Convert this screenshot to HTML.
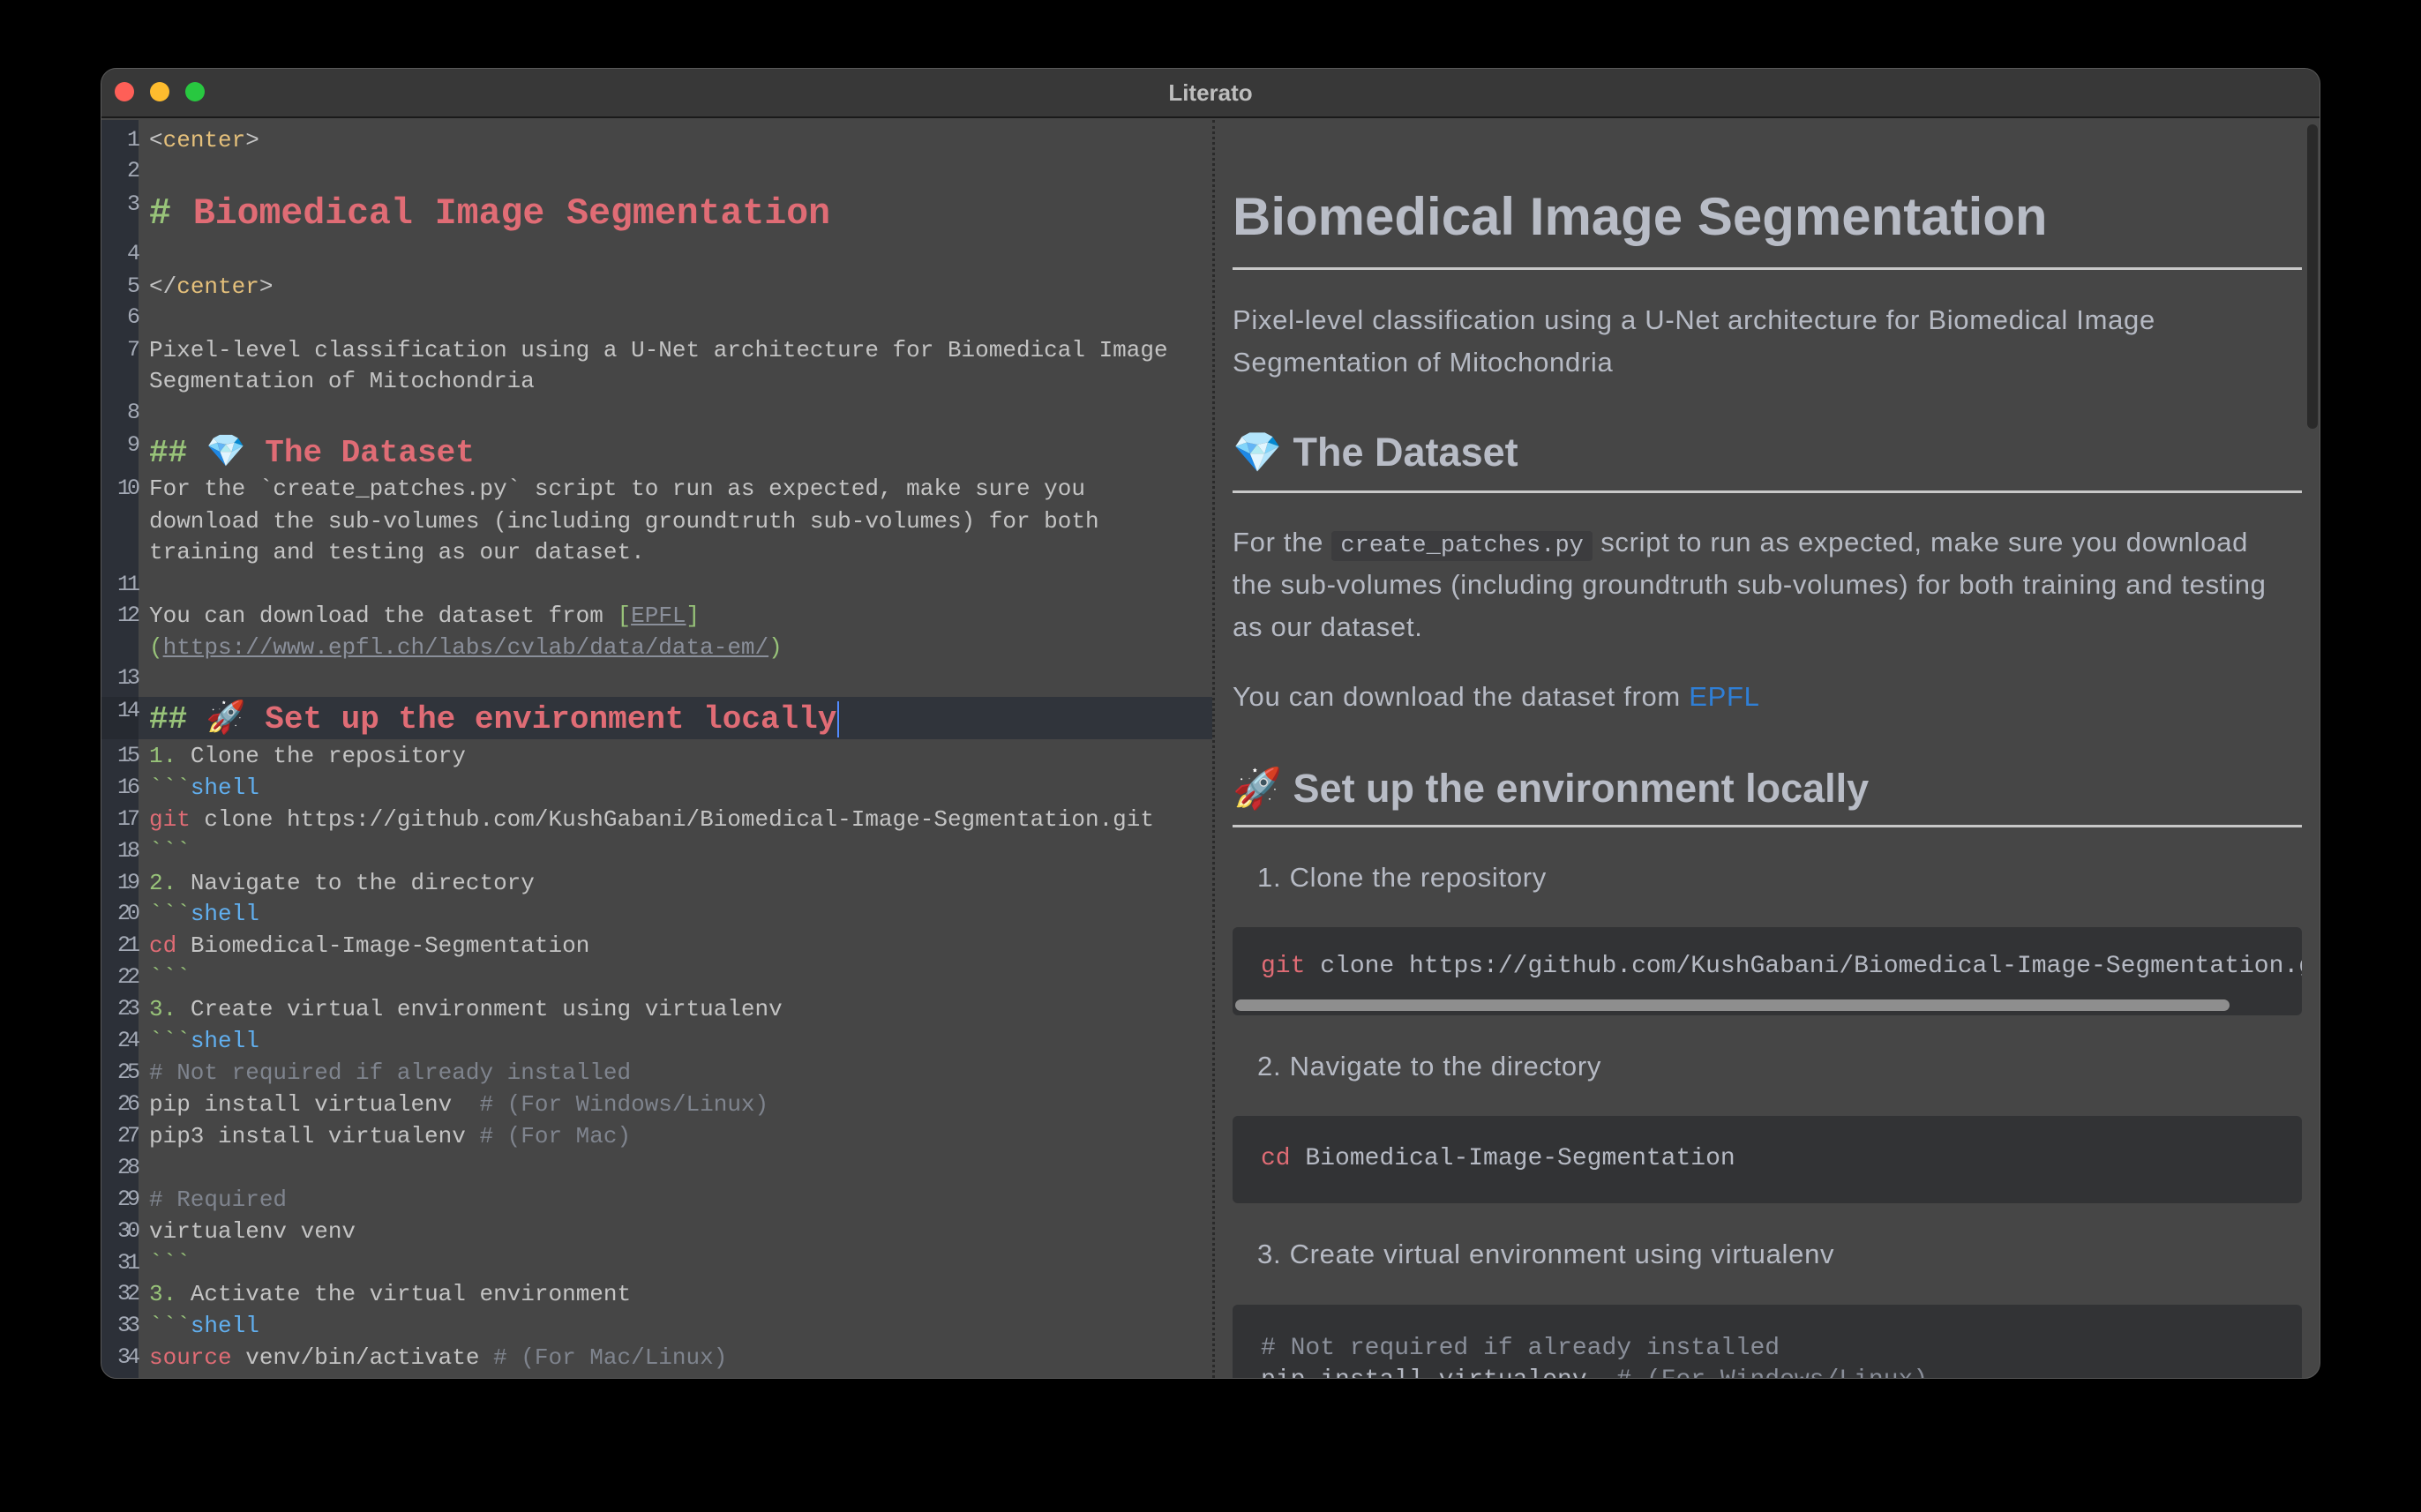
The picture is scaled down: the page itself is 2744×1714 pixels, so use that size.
<!DOCTYPE html>
<html><head><meta charset="utf-8"><style>
*{margin:0;padding:0;box-sizing:border-box}
body{width:2744px;height:1714px;background:#000;position:relative;overflow:hidden;font-family:"Liberation Sans",sans-serif}
.win{position:absolute;left:114px;top:77px;width:2516px;height:1486px;border-radius:18px;overflow:hidden;background:#464646;border:1px solid #5a5a5a}
.title{position:absolute;left:0;top:0;width:100%;height:56px;background:#383838;border-bottom:2px solid #1a1a1a}
.title .t{position:absolute;left:0;width:100%;text-align:center;top:12px;font-size:26px;font-weight:bold;color:#bdbdbd}
.dot{position:absolute;top:15px;width:22px;height:22px;border-radius:50%}
.gut{position:absolute;left:0;top:58px;width:42px;bottom:0;background:#2c3038}
.ed{position:absolute;left:0;top:0}
.l{position:absolute;left:54px;white-space:pre;font-family:"Liberation Mono",monospace;font-size:26px;line-height:36px;height:36px;color:#c4c4c4}
.n{position:absolute;left:0;width:40px;text-align:right;font-family:"Liberation Mono",monospace;font-size:25px;line-height:36px;color:#a3a9b5;letter-spacing:-4px}
.h1{font-size:41.5px;font-weight:bold;line-height:50px;height:50px}
.h2{font-size:36px;font-weight:bold;line-height:50px;height:50px}
.r{color:#e06c75}.g{color:#98c379}.y{color:#e5c07b}.b{color:#61afef}.c{color:#7f848e}.u{text-decoration:underline;color:#8a8f9a}
.div{position:absolute;left:1259px;top:58px;bottom:0;border-left:3px dotted #2a2a2a}
.pv{position:absolute;left:0;top:0;color:#b6bac4}
.p{position:absolute;left:1282px;font-size:31px;letter-spacing:0.7px;line-height:48px;white-space:nowrap}
.ph1{position:absolute;left:1282px;font-size:60px;font-weight:bold;color:#b8bcc6;line-height:70px;white-space:nowrap}
.ph2{position:absolute;left:1282px;font-size:45px;font-weight:bold;color:#b8bcc6;line-height:56px;white-space:nowrap}
.rule{position:absolute;left:1282px;width:1212px;height:3px;background:#c8c8c8}
.code{position:absolute;left:1282px;width:1212px;background:#323335;border-radius:6px;overflow:hidden}
.code .ct{position:absolute;left:32px;white-space:pre;font-family:"Liberation Mono",monospace;font-size:28px;line-height:36px;color:#b6bac4}
.ic{font-family:"Liberation Mono",monospace;font-size:27px;letter-spacing:0;background:#3c3c3e;padding:2px 10px;border-radius:4px}
</style></head><body>
<div class="win">
 <div class="title"><span class="dot" style="left:15px;background:#fe5f57"></span><span class="dot" style="left:55px;background:#febc2e"></span><span class="dot" style="left:95px;background:#28c840"></span><div class="t">Literato</div></div>
 <div class="gut"></div>
 <div style="position:absolute;left:0;top:712px;width:1259px;height:48px;background:#30343b"></div>
 <div style="position:absolute;left:0;top:712px;width:42px;height:48px;background:#262a31"></div>
 <div class="ed">
  <div class="n" style="top:63px">1</div><div class="l" style="top:63px">&lt;<span class="y">center</span>&gt;</div>
  <div class="n" style="top:98px">2</div>
  <div class="n" style="top:136px">3</div><div class="l h1" style="top:140px"><span class="g">#</span> <span class="r">Biomedical Image Segmentation</span></div>
  <div class="n" style="top:192px">4</div>
  <div class="n" style="top:229px">5</div><div class="l" style="top:229px">&lt;/<span class="y">center</span>&gt;</div>
  <div class="n" style="top:264px">6</div>
  <div class="n" style="top:301px">7</div><div class="l" style="top:301px">Pixel-level classification using a U-Net architecture for Biomedical Image</div>
  <div class="l" style="top:336px">Segmentation of Mitochondria</div>
  <div class="n" style="top:372px">8</div>
  <div class="n" style="top:409px">9</div><div class="l h2" style="top:411px"><span class="g">##</span> 💎 <span class="r">The Dataset</span></div>
  <div class="n" style="top:458px">10</div><div class="l" style="top:458px">For the &#96;create_patches.py&#96; script to run as expected, make sure you</div>
  <div class="l" style="top:495px">download the sub-volumes (including groundtruth sub-volumes) for both</div>
  <div class="l" style="top:530px">training and testing as our dataset.</div>
  <div class="n" style="top:567px">11</div>
  <div class="n" style="top:602px">12</div><div class="l" style="top:602px">You can download the dataset from <span class="g">[</span><span class="u">EPFL</span><span class="g">]</span></div>
  <div class="l" style="top:638px"><span class="g">(</span><span class="u">https://www.epfl.ch/labs/cvlab/data/data-em/</span><span class="g">)</span></div>
  <div class="n" style="top:673px">13</div>
  <div class="n" style="top:710px">14</div><div class="l h2" style="top:713px"><span class="g">##</span> 🚀 <span class="r">Set up the environment locally</span><span style="border-left:2px solid #528bff;margin-left:1px"></span></div>
  <div class="n" style="top:761px">15</div><div class="l" style="top:761px"><span class="g">1.</span> Clone the repository</div>
  <div class="n" style="top:797px">16</div><div class="l" style="top:797px"><span class="g">&#96;&#96;&#96;</span><span class="b">shell</span></div>
  <div class="n" style="top:833px">17</div><div class="l" style="top:833px"><span class="r">git</span> clone https://github.com/KushGabani/Biomedical-Image-Segmentation.git</div>
  <div class="n" style="top:869px">18</div><div class="l" style="top:869px"><span class="g">&#96;&#96;&#96;</span></div>
  <div class="n" style="top:905px">19</div><div class="l" style="top:905px"><span class="g">2.</span> Navigate to the directory</div>
  <div class="n" style="top:940px">20</div><div class="l" style="top:940px"><span class="g">&#96;&#96;&#96;</span><span class="b">shell</span></div>
  <div class="n" style="top:976px">21</div><div class="l" style="top:976px"><span class="r">cd</span> Biomedical-Image-Segmentation</div>
  <div class="n" style="top:1012px">22</div><div class="l" style="top:1012px"><span class="g">&#96;&#96;&#96;</span></div>
  <div class="n" style="top:1048px">23</div><div class="l" style="top:1048px"><span class="g">3.</span> Create virtual environment using virtualenv</div>
  <div class="n" style="top:1084px">24</div><div class="l" style="top:1084px"><span class="g">&#96;&#96;&#96;</span><span class="b">shell</span></div>
  <div class="n" style="top:1120px">25</div><div class="l c" style="top:1120px"># Not required if already installed</div>
  <div class="n" style="top:1156px">26</div><div class="l" style="top:1156px">pip install virtualenv  <span class="c"># (For Windows/Linux)</span></div>
  <div class="n" style="top:1192px">27</div><div class="l" style="top:1192px">pip3 install virtualenv <span class="c"># (For Mac)</span></div>
  <div class="n" style="top:1228px">28</div>
  <div class="n" style="top:1264px">29</div><div class="l c" style="top:1264px"># Required</div>
  <div class="n" style="top:1300px">30</div><div class="l" style="top:1300px">virtualenv venv</div>
  <div class="n" style="top:1336px">31</div><div class="l" style="top:1336px"><span class="g">&#96;&#96;&#96;</span></div>
  <div class="n" style="top:1371px">32</div><div class="l" style="top:1371px"><span class="g">3.</span> Activate the virtual environment</div>
  <div class="n" style="top:1407px">33</div><div class="l" style="top:1407px"><span class="g">&#96;&#96;&#96;</span><span class="b">shell</span></div>
  <div class="n" style="top:1443px">34</div><div class="l" style="top:1443px"><span class="r">source</span> venv/bin/activate <span class="c"># (For Mac/Linux)</span></div>
 </div>
 <div class="div"></div>
 <div class="pv">
  <div class="ph1" style="top:133px">Biomedical Image Segmentation</div>
  <div class="rule" style="top:225px"></div>
  <div class="p" style="top:261px">Pixel-level classification using a U-Net architecture for Biomedical Image</div>
  <div class="p" style="top:309px">Segmentation of Mitochondria</div>
  <div class="ph2" style="top:407px">💎 The Dataset</div>
  <div class="rule" style="top:478px"></div>
  <div class="p" style="top:513px">For the <span class="ic">create_patches.py</span> script to run as expected, make sure you download</div>
  <div class="p" style="top:561px">the sub-volumes (including groundtruth sub-volumes) for both training and testing</div>
  <div class="p" style="top:609px">as our dataset.</div>
  <div class="p" style="top:688px">You can download the dataset from <span style="color:#2f7fd6">EPFL</span></div>
  <div class="ph2" style="top:788px">🚀 Set up the environment locally</div>
  <div class="rule" style="top:857px"></div>
  <div class="p" style="top:893px;left:1310px">1. Clone the repository</div>
  <div class="code" style="top:973px;height:100px"><div class="ct" style="top:27px"><span class="r">git</span> clone https://github.com/KushGabani/Biomedical-Image-Segmentation.git</div><div style="position:absolute;left:3px;top:82px;width:1127px;height:13px;border-radius:7px;background:#8e8e8e"></div></div>
  <div class="p" style="top:1107px;left:1310px">2. Navigate to the directory</div>
  <div class="code" style="top:1187px;height:99px"><div class="ct" style="top:31px"><span class="r">cd</span> Biomedical-Image-Segmentation</div></div>
  <div class="p" style="top:1320px;left:1310px">3. Create virtual environment using virtualenv</div>
  <div class="code" style="top:1401px;height:120px"><div class="ct" style="top:32px;color:#8a8f9a"># Not required if already installed</div><div class="ct" style="top:68px">pip install virtualenv  <span style="color:#8a8f9a"># (For Windows/Linux)</span></div></div>
 </div>
 <div style="position:absolute;left:2500px;top:63px;width:12px;height:345px;border-radius:6px;background:#2a2a2a"></div>
</div>
</body></html>
